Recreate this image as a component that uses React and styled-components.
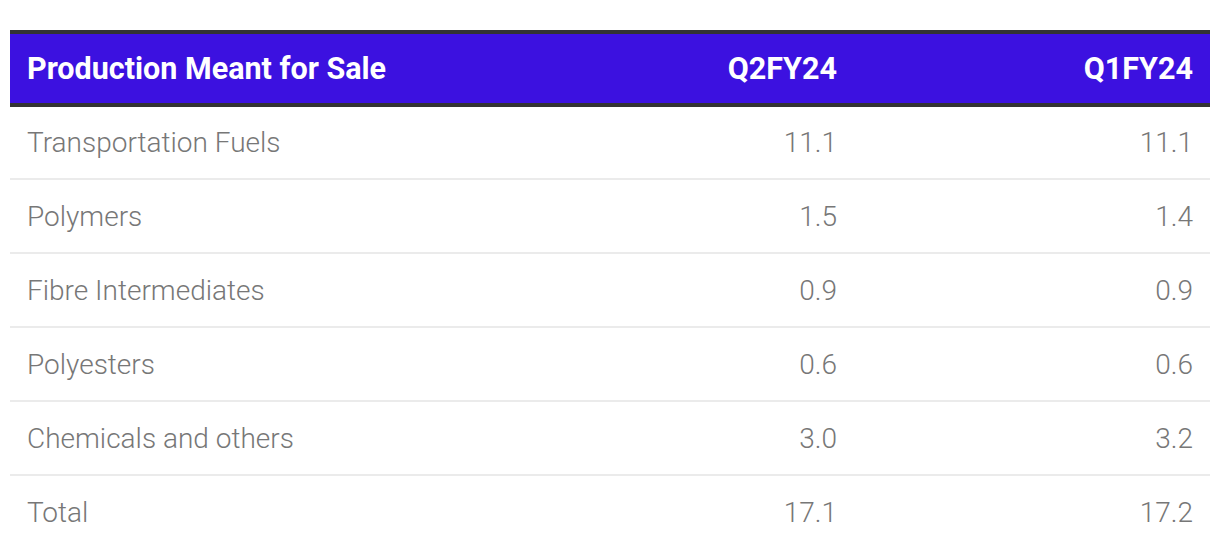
import React from 'react';
import styled, { createGlobalStyle } from 'styled-components';

const GlobalStyle = createGlobalStyle`
  body {
    margin: 0;
    background: #fff;
    font-family: Roboto, "Liberation Sans", sans-serif;
  }
`;

const Page = styled.div`
  padding: 30px 10px 0 10px;
`;

const Table = styled.table`
  width: 1200px;
  border-collapse: collapse;
  table-layout: fixed;
`;

const HeadRow = styled.tr`
  background: #3c11e0;
  border-top: 4px solid #333;
  border-bottom: 4px solid #333;
`;

const HeadCell = styled.th`
  height: 73px;
  padding: 0 17px;
  color: #fff;
  font-size: 30.5px;
  font-weight: 700;
  text-align: ${p => (p.$right ? 'right' : 'left')};
  box-sizing: border-box;
`;

const Row = styled.tr`
  border-bottom: ${p => (p.$last ? 'none' : '2px solid #ebebeb')};
`;

const Cell = styled.td`
  height: 74px;
  padding: 0 17px;
  color: #777;
  font-size: 28px;
  font-weight: 300;
  text-align: ${p => (p.$right ? 'right' : 'left')};
  box-sizing: border-box;
`;

const rows = [
  ['Transportation Fuels', '11.1', '11.1'],
  ['Polymers', '1.5', '1.4'],
  ['Fibre Intermediates', '0.9', '0.9'],
  ['Polyesters', '0.6', '0.6'],
  ['Chemicals and others', '3.0', '3.2'],
  ['Total', '17.1', '17.2'],
];

export default function App() {
  return (
    <Page>
      <GlobalStyle />
      <Table>
        <colgroup>
          <col style={{ width: 488 }} />
          <col style={{ width: 356 }} />
          <col style={{ width: 356 }} />
        </colgroup>
        <thead>
          <HeadRow>
            <HeadCell>Production Meant for Sale</HeadCell>
            <HeadCell $right>Q2FY24</HeadCell>
            <HeadCell $right>Q1FY24</HeadCell>
          </HeadRow>
        </thead>
        <tbody>
          {rows.map((r, i) => (
            <Row key={r[0]} $last={i === rows.length - 1}>
              <Cell>{r[0]}</Cell>
              <Cell $right>{r[1]}</Cell>
              <Cell $right>{r[2]}</Cell>
            </Row>
          ))}
        </tbody>
      </Table>
    </Page>
  );
}
